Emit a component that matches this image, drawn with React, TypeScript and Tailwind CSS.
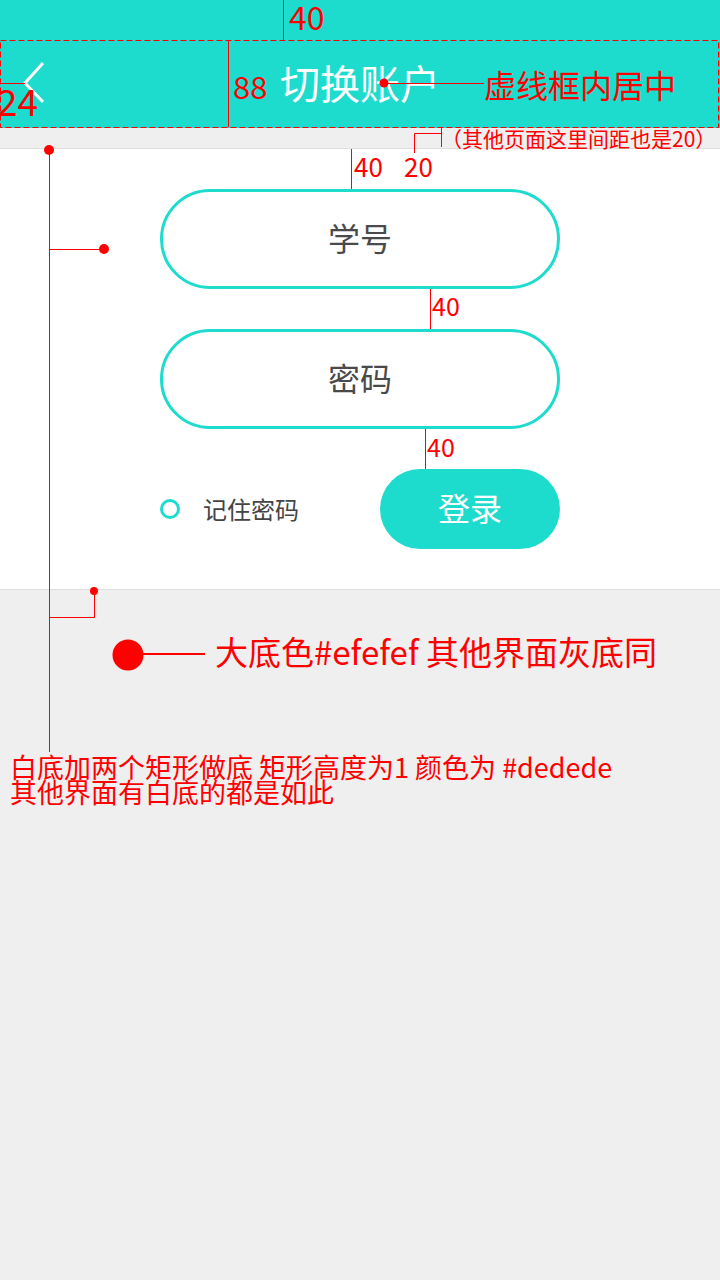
import React from "react";

const TEAL = "#1edccd";
const cjk = { fontFamily: '"Noto Sans CJK SC", "Noto Sans", sans-serif' };

// Design annotation label (red text laid over the mock)
const Note: React.FC<{ x: number; y: number; size: number; lh?: number; children: React.ReactNode }> = ({
  x,
  y,
  size,
  lh,
  children,
}) => (
  <div
    className="absolute whitespace-pre text-[#ff0000]"
    style={{ left: x, top: y, fontSize: size, lineHeight: `${lh ?? size}px` }}
  >
    {children}
  </div>
);

const Annotations: React.FC = () => (
  <div className="pointer-events-none absolute inset-0" style={cjk}>
    <svg width="720" height="1280" className="absolute left-0 top-0">
      <g stroke="#ff0000" strokeWidth="1" fill="none">
        <rect x="0.5" y="40.5" width="718" height="87" strokeDasharray="6 3" />
        <line x1="283.5" y1="0" x2="283.5" y2="40" />
        <line x1="228.5" y1="40" x2="228.5" y2="127" />
        <line x1="0" y1="83.5" x2="25" y2="83.5" />
        <line x1="384" y1="83.5" x2="484" y2="83.5" />
        <polyline points="441.5,127 441.5,147" />
        <polyline points="441.5,133.5 414.5,133.5 414.5,153" />
        <line x1="351.5" y1="149" x2="351.5" y2="189" />
        <line x1="430.5" y1="289" x2="430.5" y2="329" />
        <line x1="425.5" y1="429" x2="425.5" y2="469" />
        <line x1="49.5" y1="149" x2="49.5" y2="752" />
        <line x1="49.5" y1="249.5" x2="104" y2="249.5" />
        <polyline points="49.5,617.5 94.5,617.5 94.5,591" />
        <line x1="143" y1="654" x2="205" y2="654" strokeWidth="2" />
      </g>
      <g fill="#ff0000">
        <circle cx="384" cy="83" r="4.5" />
        <circle cx="49" cy="150" r="5" />
        <circle cx="104" cy="249" r="5" />
        <circle cx="94" cy="591" r="4" />
        <circle cx="128" cy="655" r="15.5" />
      </g>
    </svg>

    <Note x={289} y={0} size={32}>40</Note>
    <Note x={233} y={70} size={31}>88</Note>
    <Note x={-3} y={82} size={37}>24</Note>
    <Note x={484} y={68} size={32}>虚线框内居中</Note>
    <Note x={441} y={128} size={21}>（其他页面这里间距也是20）</Note>
    <Note x={404} y={153} size={26}>20</Note>
    <Note x={354} y={153} size={26}>40</Note>
    <Note x={432} y={293} size={25}>40</Note>
    <Note x={427} y={434} size={25}>40</Note>
    <Note x={215} y={635} size={33}>大底色#efefef 其他界面灰底同</Note>
    <Note x={10} y={754} size={27} lh={25}>
      {"白底加两个矩形做底 矩形高度为1 颜色为 #dedede\n其他界面有白底的都是如此"}
    </Note>
  </div>
);

export default function App() {
  return (
    <div className="relative h-[1280px] w-[720px] overflow-hidden bg-[#efefef]" style={cjk}>
      {/* Header: status area 40 + bar 88 */}
      <div className="bg-[#1edccd]">
        <div className="h-10" />
        <div className="relative flex h-[88px] items-center justify-center">
          <svg width="24" height="44" viewBox="0 0 24 44" className="absolute left-[22px] top-[21px]">
            <polyline points="21,2 3,22 21,41" fill="none" stroke="#fff" strokeWidth="3" />
          </svg>
          <span className="pb-1 text-[40px] leading-none text-white">切换账户</span>
        </div>
      </div>

      {/* White card with 1px #dedede top/bottom */}
      <div className="mt-5 border-y border-[#dedede] bg-white">
        <div className="flex flex-col items-center gap-10 py-10">
          <div className="flex h-[100px] w-[400px] items-center justify-center rounded-full border-[3px] border-[#1edccd]">
            <span className="pb-1 text-[32px] leading-none text-[#4a4a4a]">学号</span>
          </div>
          <div className="flex h-[100px] w-[400px] items-center justify-center rounded-full border-[3px] border-[#1edccd]">
            <span className="pb-1 text-[32px] leading-none text-[#4a4a4a]">密码</span>
          </div>
          <div className="flex w-[400px] items-center justify-between">
            <div className="flex items-center gap-[23px]">
              <span className="h-5 w-5 rounded-full border-[3px] border-[#1edccd]" />
              <span className="text-[24px] leading-none text-[#444]">记住密码</span>
            </div>
            <button
              className="flex h-20 w-[180px] items-center justify-center rounded-full pb-1 text-[32px] leading-none text-white"
              style={{ backgroundColor: TEAL }}
            >
              登录
            </button>
          </div>
        </div>
      </div>

      <Annotations />
    </div>
  );
}
